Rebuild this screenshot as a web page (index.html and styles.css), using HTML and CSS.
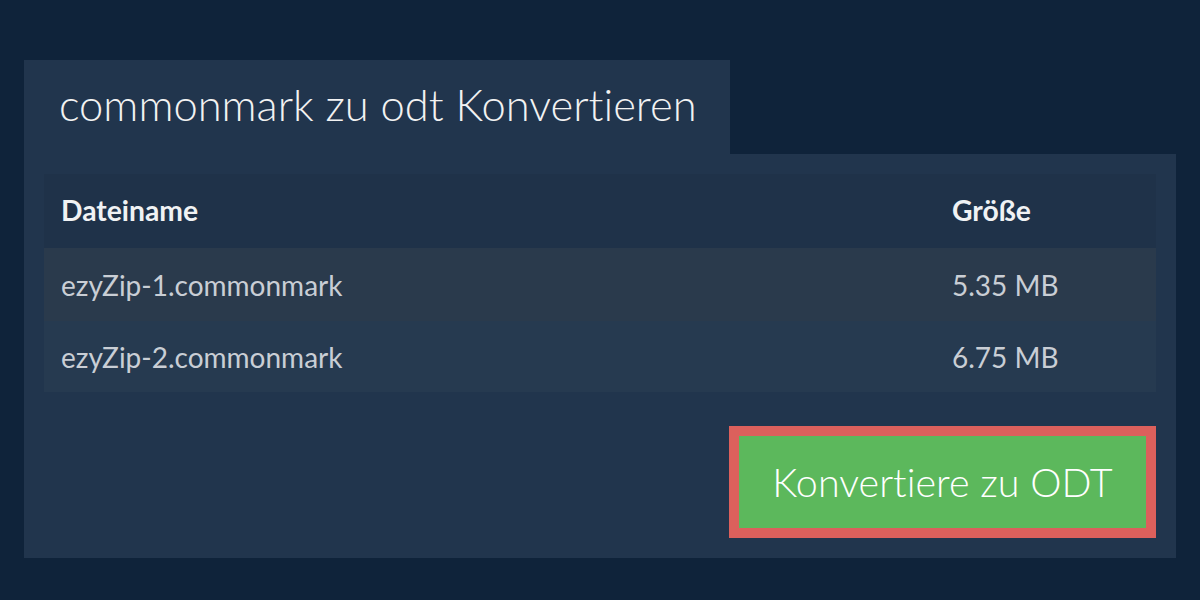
FILE: index.html
```html
<!DOCTYPE html>
<html lang="de">
<head>
<meta charset="utf-8">
<link rel="stylesheet" href="styles.css">
</head>
<body>
<div class="page">
  <div class="tab"><h1 class="title">commonmark zu odt Konvertieren</h1></div>
  <div class="panel">
    <div class="table">
      <div class="row head"><div class="cell">Dateiname</div><div class="cell">Größe</div></div>
      <div class="row odd"><div class="cell">ezyZip-1.commonmark</div><div class="cell">5.35 MB</div></div>
      <div class="row even"><div class="cell">ezyZip-2.commonmark</div><div class="cell">6.75 MB</div></div>
    </div>
    <div class="actions">
      <button class="convert">Konvertiere zu ODT</button>
    </div>
  </div>
</div>
</body>
</html>
```
FILE: styles.css
```css
html, body { margin: 0; padding: 0; }
body {
  background: #0f233a;
  font-family: Lato, "Open Sans", sans-serif;
  font-variant-ligatures: none;
  width: 1200px;
  height: 600px;
  overflow: hidden;
}
.page {
  padding: 60px 24px 0 24px;
}
.tab {
  width: 706px;
  height: 94px;
  background: #21354d;
  display: flex;
  align-items: center;
}
.title {
  margin: 0;
  padding-left: 35px;
  font-weight: 300;
  font-size: 43.5px;
  color: #f2f2f2;
  line-height: 1;
  padding-bottom: 4px;
}
.panel {
  background: #21354d;
  padding: 20px 20px 19px 20px;
  height: 404px;
  box-sizing: border-box;
}
.table {
  display: flex;
  flex-direction: column;
}
.row {
  display: grid;
  grid-template-columns: 1fr 221px;
  align-items: center;
}
.cell {
  padding-left: 17px;
  font-size: 28px;
  line-height: 1;
}
.head { height: 74px; background: #1f3249; color: #f0f2f4; font-weight: 700; }
.head .cell { padding-bottom: 2px; font-size: 28.3px; }
.odd { height: 73px; background: #2a3a4c; color: #c9ced5; }
.even { height: 71px; background: #263a50; color: #c9ced5; }
.actions {
  display: flex;
  justify-content: flex-end;
  padding-top: 34px;
}
.convert {
  width: 427px;
  height: 112px;
  box-sizing: border-box;
  border: 10px solid #dc605c;
  background: #5cb85c;
  color: #fff;
  font-family: Lato, sans-serif;
  font-variant-ligatures: none;
  font-weight: 300;
  font-size: 39.5px;
  padding: 0;
  padding-bottom: 2px;
}
```
